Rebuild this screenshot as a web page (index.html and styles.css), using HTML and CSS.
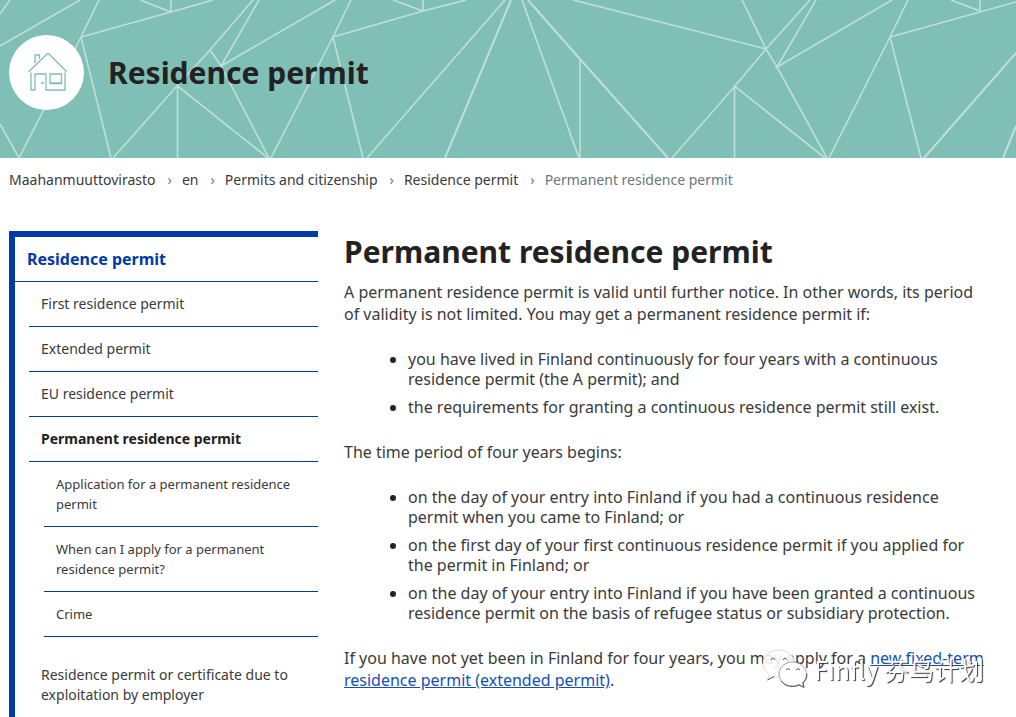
FILE: index.html
```html
<!DOCTYPE html>
<html lang="en">
<head>
<meta charset="utf-8">
<meta name="viewport" content="width=device-width, initial-scale=1">
<title>Permanent residence permit</title>
<link rel="stylesheet" href="styles.css">
</head>
<body>
<header class="banner">
  <svg class="banner-pattern" viewBox="0 0 1016 158" preserveAspectRatio="xMidYMid slice" aria-hidden="true">
    <g fill="none" stroke="#c0dfda" stroke-width="1.6">
      <path d="M0 14L10 0M0 46L80 0M99 0L81 37L19 158M0 124L19 158M81 37L111 158M81 37L171 12L213 0M140 0L171 12V0"/>
      <path d="M253 0L210 50L177 86L113 158M259 0L221 66L335 0M210 50L221 66L269 158M177.500 158V86L268 158"/>
      <path d="M351 0L333 37L271 158M333 37L363 158M333 37L423 11L466 0M393 0L423 11V0"/>
      <path d="M505 0L367 158M522 0L579 158M580 59V158M573 0L680 27L766 49"/>
      <path d="M742 0L766 49L777 67L827 158M810 0L766 49L735 86L672 158M816 0L777 67L892 0M734.500 158V86L825 158"/>
      <path d="M908 0L890 37L829 158M921 158L890 37L1016 2M951 0L980 11V0"/>
      <path stroke-width="2" d="M528 0L580 59L668 158M1016 53L924 158M1016 126L1003 158M511 0L445 158"/>
    </g>
  </svg>
  <div class="banner-content">
    <span class="banner-icon">
      <svg viewBox="0 2 40 40" width="40" height="40" fill="none" stroke="#7fbfb6" stroke-width="1.3" aria-hidden="true">
        <path d="M1.500 21L21 2L40 21M8 12V4H12.500V8M4 21.500V39H8V23H19V39H38V21.500M23 23H34.500V32.500H23ZM23 32H34.500M14 32H17"/>
      </svg>
    </span>
    <p class="banner-title">Residence permit</p>
  </div>
</header>
<nav class="breadcrumb" aria-label="Breadcrumb">
  <ol>
    <li><a href="#">Maahanmuuttovirasto</a></li>
    <li><a href="#">en</a></li>
    <li><a href="#">Permits and citizenship</a></li>
    <li><a href="#">Residence permit</a></li>
    <li class="current" aria-current="page">Permanent residence permit</li>
  </ol>
</nav>
<div class="layout">
  <nav class="sidebar" aria-label="Section">
    <a class="sidebar-title" href="#">Residence permit</a>
    <ul class="menu">
      <li><a href="#">First residence permit</a></li>
      <li><a href="#">Extended permit</a></li>
      <li><a href="#">EU residence permit</a></li>
      <li><a class="active" href="#">Permanent residence permit</a>
        <ul class="submenu">
          <li><a href="#">Application for a permanent residence permit</a></li>
          <li><a href="#">When can I apply for a permanent residence permit?</a></li>
          <li><a href="#">Crime</a></li>
        </ul>
      </li>
      <li><a href="#">Residence permit or certificate due to exploitation by employer</a></li>
    </ul>
  </nav>
  <main class="content">
    <h1>Permanent residence permit</h1>
    <p>A permanent residence permit is valid until further notice. In other words, its period of validity is not limited. You may get a permanent residence permit if:</p>
    <ul>
      <li>you have lived in Finland continuously for four years with a continuous residence permit (the A permit); and</li>
      <li>the requirements for granting a continuous residence permit still exist.</li>
    </ul>
    <p>The time period of four years begins:</p>
    <ul>
      <li>on the day of your entry into Finland if you had a continuous residence permit when you came to Finland; or</li>
      <li>on the first day of your first continuous residence permit if you applied for the permit in Finland; or</li>
      <li>on the day of your entry into Finland if you have been granted a continuous residence permit on the basis of refugee status or subsidiary protection.</li>
    </ul>
    <p>If you have not yet been in Finland for four years, you may apply for a <a href="#">new fixed-term residence permit (extended permit)</a>.</p>
  </main>
</div>
<div class="watermark">
  <svg viewBox="0 0 46 40" width="46" height="40" aria-hidden="true">
    <g fill="#fff" fill-opacity=".88" stroke="#777" stroke-width=".7">
      <path stroke="#ccc" d="M17 1C8 1 1 7 1 14.500C1 19 3.500 23 7.500 25.500L5.500 31L12 27.500C14 28 16 28.200 18 28C26 28 33 22 33 14.500C33 7 26 1 17 1Z"/>
      <path fill-opacity="1" d="M30.500 13C23 13 17 18.500 17 25C17 32 23 37 30.500 37C33 37 35 36.500 37 35.500L42 38L40.500 33.500C43 31.500 44.500 28.500 44.500 25C44.500 18.500 38 13 30.500 13Z"/>
    </g>
    <path d="M9 11Q11 7 13 11M21 11Q23 7 25 11M24 21Q26 18 28 21M34 21Q36 18 38 21" fill="none" stroke="#555"/>
    <path d="M5.500 31L12 27.500M19 32C22 36 26 37.500 30.500 37.500C33 37.500 35 37 37 36L42 38.500L41 34C43.500 32 45 29 45 25" fill="none" stroke="#555"/>
  </svg>
  <span>Finfly 芬鸟计划</span>
</div>
</body>
</html>
```
FILE: styles.css
```css
* {
  box-sizing: border-box;
}

body {
  margin: 0;
  height: 100vh;
  display: flex;
  flex-direction: column;
  overflow: hidden;
  background: #fff;
  color: #3a3a3a;
  font-family: "Noto Sans", "Noto Sans CJK SC", sans-serif;
  font-size: 16px;
  line-height: 22px;
}

a {
  color: inherit;
  text-decoration: none;
}

ul,
ol {
  list-style: none;
  margin: 0;
  padding: 0;
}

.banner {
  position: relative;
  flex: none;
  padding: 35px 9px 48px;
  background: #7fbfb6;
}

.banner-pattern {
  position: absolute;
  inset: 0;
  width: 100%;
  height: 100%;
}

.banner-content {
  position: relative;
  display: flex;
  align-items: center;
  gap: 24px;
}

.banner-icon {
  display: flex;
  align-items: center;
  justify-content: center;
  width: 75px;
  height: 75px;
  border-radius: 50%;
  background: #fff;
}

.banner-title {
  margin: 0;
  color: #222;
  font-size: 30px;
  font-weight: 700;
  line-height: 40px;
}

.breadcrumb {
  flex: none;
  padding: 12px 9px;
  font-size: 14px;
  line-height: 20px;
}

.breadcrumb ol {
  display: flex;
  flex-wrap: wrap;
}

.breadcrumb li + li::before {
  content: "›";
  padding: 0 10px 0 12px;
  color: #777;
}

.breadcrumb .current {
  color: #6c757d;
}

.layout {
  flex: 1;
  display: flex;
  align-items: stretch;
  gap: 26px;
  padding: 29px 30px 0 9px;
}

.sidebar {
  flex: none;
  width: 309px;
  border-top: 6px solid #003aa6;
  border-left: 6px solid #003aa6;
  font-size: 14px;
  line-height: 20px;
}

.sidebar a {
  display: block;
  padding: 12px;
  border-bottom: 1px solid #003aa6;
}

.sidebar .sidebar-title {
  color: #003aa6;
  font-size: 16px;
  font-weight: 700;
}

.menu {
  padding-left: 14px;
}

.menu .active {
  color: #222;
  font-weight: 700;
}

.submenu {
  padding: 0 0 16px 15px;
  font-size: 13px;
}

.content {
  flex: 1;
  min-width: 0;
}

.content h1 {
  margin: 0 0 8px;
  color: #222;
  font-size: 30px;
  line-height: 42px;
}

.content p {
  margin: 0;
}

.content ul {
  margin: 24px 0;
  padding-left: 64px;
  list-style: disc;
  line-height: 20px;
}

.content li + li {
  margin-top: 8px;
}

.content li::marker {
  color: #222;
}

.content a {
  color: #1450b4;
  text-decoration: underline;
}

.watermark {
  position: fixed;
  right: 32px;
  bottom: 28px;
  display: flex;
  align-items: center;
  gap: 6px;
  color: #fff;
  font-family: "Noto Sans CJK SC", sans-serif;
  font-size: 25px;
  line-height: 40px;
  text-shadow: 1px 1px 1px #333;
}
```
